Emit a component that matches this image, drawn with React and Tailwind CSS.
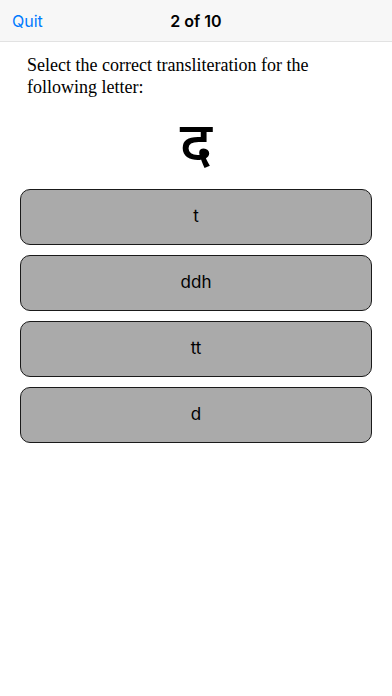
export default function App() {
  const options = ["t", "ddh", "tt", "d"];
  return (
    <div className="w-[392px] h-[696px] bg-white flex flex-col" style={{ fontFamily: "Inter, 'Liberation Sans', sans-serif" }}>
      <div className="h-[42px] bg-[#f7f7f7] border-b border-[#e2e2e2] grid grid-cols-3 items-center px-3 shrink-0">
        <div className="text-[16px] text-[#007aff] leading-none">Quit</div>
        <div className="text-[16px] font-semibold text-black text-center leading-none whitespace-nowrap">2 of 10</div>
        <div></div>
      </div>
      <div className="px-[27px] pt-[12px] text-[18px] leading-[22px] text-black" style={{ fontFamily: "'Liberation Serif', serif" }}>
        Select the correct transliteration for the following letter:
      </div>
      <div className="flex justify-center mt-[17px] h-[67px] items-center text-[60px] leading-none text-black font-medium" style={{ fontFamily: "'Noto Sans Devanagari', 'Noto Sans', sans-serif" }}>
        द
      </div>
      <div className="flex flex-col gap-[10px] px-[20px] mt-[7px]">
        {options.map((o) => (
          <div key={o} className="h-[56px] rounded-[10px] border-[1.5px] border-[#1a1a1a] bg-[#aaaaaa] flex items-center justify-center text-[17px] text-black">
            {o}
          </div>
        ))}
      </div>
    </div>
  );
}
